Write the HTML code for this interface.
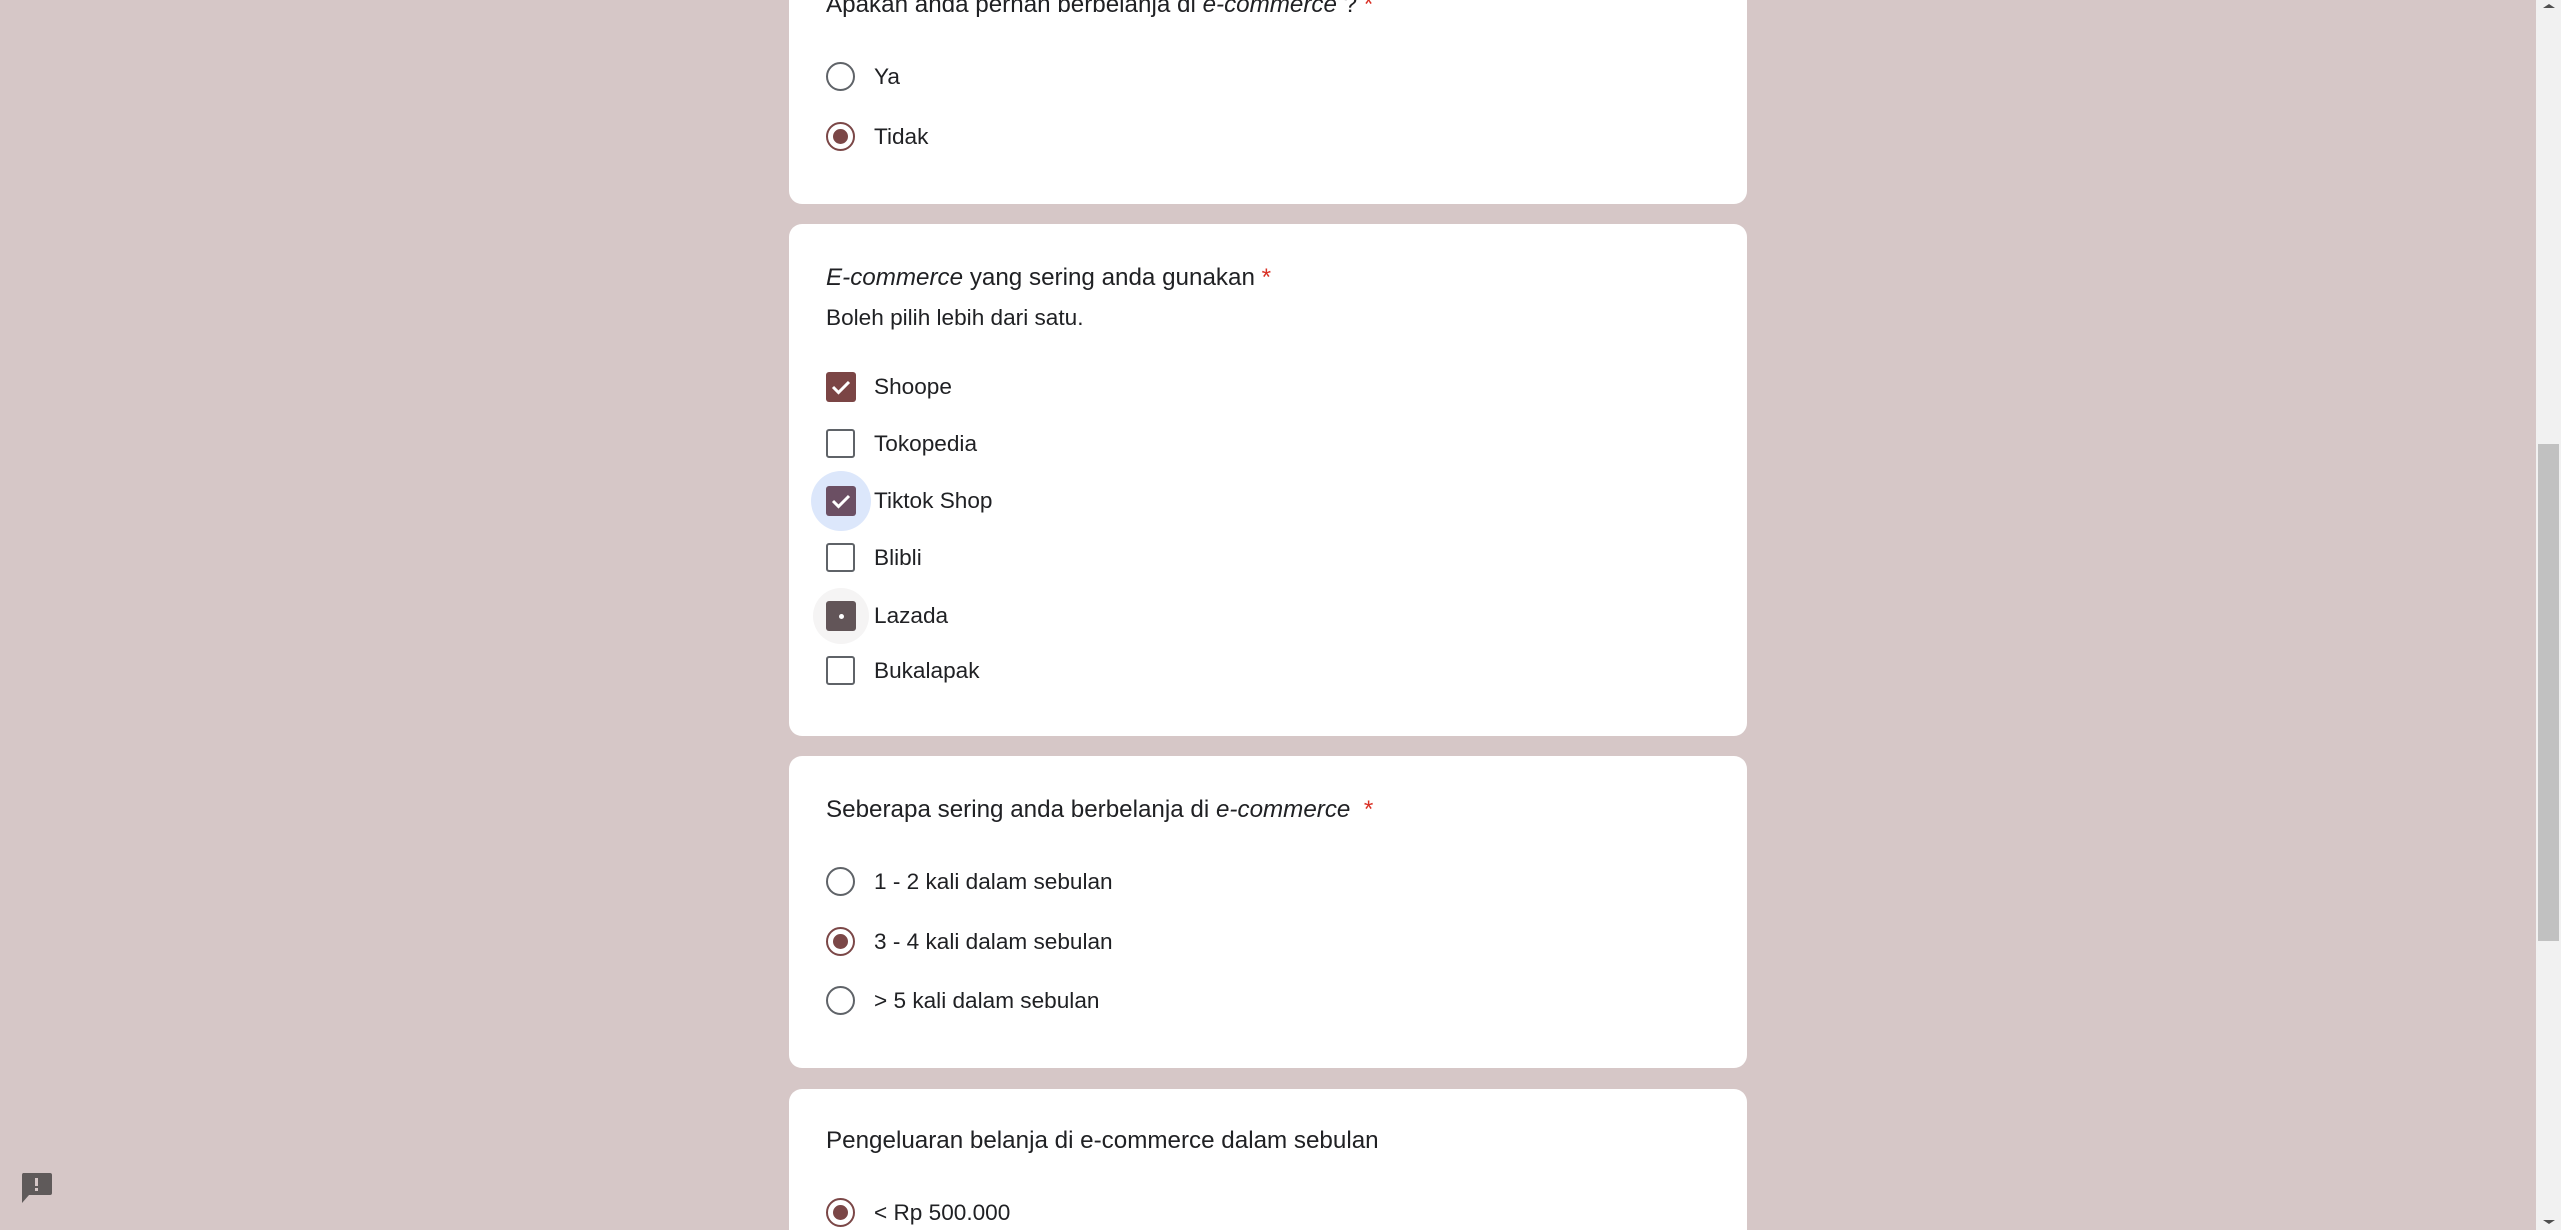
<!DOCTYPE html>
<html style="overflow:hidden;height:1230px"><head><meta charset="utf-8"><style>
body{margin:0;width:2561px;height:1230px;background:#d6c7c7;overflow:hidden;position:relative;font-family:"Liberation Sans",Arial,sans-serif;color:#202124}
.card{position:absolute;left:789px;width:958px;background:#fff;border-radius:13px}
.t{position:absolute;left:37px;font-size:24.2px;line-height:30px;white-space:nowrap}
.req{color:#d93025}
.o{position:absolute;left:37px;height:30px;line-height:30px;font-size:22.6px;white-space:nowrap}
.o span{position:absolute;left:48px;top:0}
.r{position:absolute;left:0;top:0;width:25px;height:25px;border:2.5px solid #5f6368;border-radius:50%}
.r.s{border-color:#7b4747}
.r.s::after{content:"";position:absolute;left:5px;top:5px;width:15px;height:15px;border-radius:50%;background:#7b4747}
.c{position:absolute;left:0;top:0;width:25px;height:25px;border:2.5px solid #5f6368;border-radius:3px}
.cf{position:absolute;left:0;top:0;width:30px;height:30px;border-radius:3px}
</style></head><body>
<div class="card" style="top:-20px;height:224px">
 <div class="t" style="top:10px">Apakah anda pernah berbelanja di <i>e-commerce</i> ? <span class="req">*</span></div>
 <div class="o" style="top:82px"><div class="r"></div><span>Ya</span></div>
 <div class="o" style="top:142px"><div class="r s"></div><span>Tidak</span></div>
</div>
<div class="card" style="top:224px;height:512px">
 <div class="t" style="top:39px"><i>E-commerce</i> yang sering anda gunakan <span class="req">*</span></div>
 <div class="o" style="top:79px">Boleh pilih lebih dari satu.</div>
 <div class="o" style="top:148px"><div class="cf" style="background:#7b4545"><svg width="30" height="30"><path d="M7 15l5.5 5.5L23 10" stroke="#fff" stroke-width="3" fill="none"/></svg></div><span>Shoope</span></div>
 <div class="o" style="top:205px"><div class="c"></div><span>Tokopedia</span></div>
 <div class="o" style="top:262px"><div style="position:absolute;left:-15px;top:-15px;width:60px;height:60px;border-radius:50%;background:#dce7fb"></div><div class="cf" style="background:#6b4f63"><svg width="30" height="30"><path d="M7 15l5.5 5.5L23 10" stroke="#fff" stroke-width="3" fill="none"/></svg></div><span>Tiktok Shop</span></div>
 <div class="o" style="top:319px"><div class="c"></div><span>Blibli</span></div>
 <div class="o" style="top:377px"><div style="position:absolute;left:-13px;top:-13px;width:56px;height:56px;border-radius:50%;background:#f5f4f4"></div><div class="cf" style="background:#625558"><div style="position:absolute;left:13px;top:13px;width:5px;height:5px;border-radius:50%;background:#fff"></div></div><span>Lazada</span></div>
 <div class="o" style="top:432px"><div class="c"></div><span>Bukalapak</span></div>
</div>
<div class="card" style="top:756px;height:312px">
 <div class="t" style="top:39px">Seberapa sering anda berbelanja di <i>e-commerce</i>&nbsp; <span class="req">*</span></div>
 <div class="o" style="top:111px"><div class="r"></div><span>1 - 2 kali dalam sebulan</span></div>
 <div class="o" style="top:171px"><div class="r s"></div><span>3 - 4 kali dalam sebulan</span></div>
 <div class="o" style="top:230px"><div class="r"></div><span>&gt; 5 kali dalam sebulan</span></div>
</div>
<div class="card" style="top:1089px;height:141px;border-radius:13px 13px 0 0">
 <div class="t" style="top:37px">Pengeluaran belanja di e-commerce dalam sebulan</div>
 <div class="o" style="top:109px"><div class="r s"></div><span>&lt; Rp 500.000</span></div>
</div>
<svg style="position:absolute;left:20px;top:1172px" width="32" height="32"><path d="M3 1h27a2 2 0 0 1 2 2v18a2 2 0 0 1-2 2H9l-7 8V3a2 2 0 0 1 1-2z" fill="#5f5a5a"/><rect x="15" y="6" width="3" height="8" fill="#d6c7c7"/><rect x="15" y="16" width="3" height="3" fill="#d6c7c7"/></svg>
<div style="position:absolute;left:2536px;top:0;width:25px;height:1230px;background:#f1f1f1">
 <div style="position:absolute;left:2px;top:444px;width:21px;height:497px;background:#c1c1c1"></div>
 <div style="position:absolute;left:7px;top:4px;border:6px solid transparent;border-bottom:4px solid #505050;border-top:0"></div>
 <div style="position:absolute;left:7px;top:1220px;border:6px solid transparent;border-top:4px solid #505050;border-bottom:0"></div>
</div>
</body></html>
